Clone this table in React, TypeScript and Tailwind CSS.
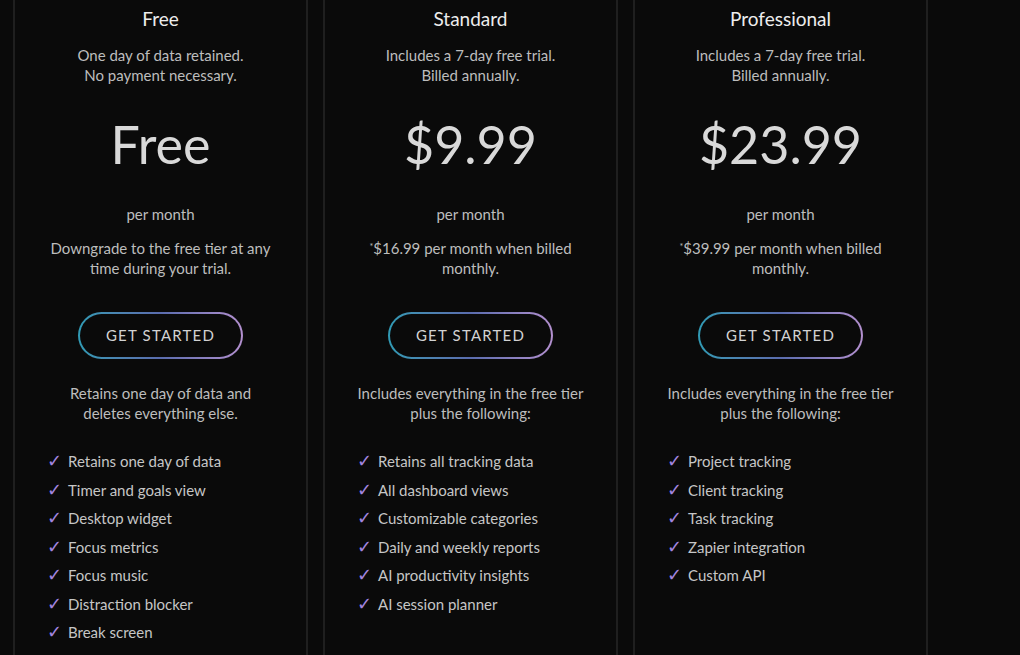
import React from 'react'

type Plan = {
  name: string
  blurb: [string, string]
  price: string
  note: [string, string]
  intro: [string, string]
  features: string[]
}

const plans: Plan[] = [
  {
    name: 'Free',
    blurb: ['One day of data retained.', 'No payment necessary.'],
    price: 'Free',
    note: ['Downgrade to the free tier at any', 'time during your trial.'],
    intro: ['Retains one day of data and', 'deletes everything else.'],
    features: [
      'Retains one day of data',
      'Timer and goals view',
      'Desktop widget',
      'Focus metrics',
      'Focus music',
      'Distraction blocker',
      'Break screen',
    ],
  },
  {
    name: 'Standard',
    blurb: ['Includes a 7-day free trial.', 'Billed annually.'],
    price: '$9.99',
    note: ['*$16.99 per month when billed', 'monthly.'],
    intro: ['Includes everything in the free tier', 'plus the following:'],
    features: [
      'Retains all tracking data',
      'All dashboard views',
      'Customizable categories',
      'Daily and weekly reports',
      'AI productivity insights',
      'AI session planner',
    ],
  },
  {
    name: 'Professional',
    blurb: ['Includes a 7-day free trial.', 'Billed annually.'],
    price: '$23.99',
    note: ['*$39.99 per month when billed', 'monthly.'],
    intro: ['Includes everything in the free tier', 'plus the following:'],
    features: ['Project tracking', 'Client tracking', 'Task tracking', 'Zapier integration', 'Custom API'],
  },
]

function Note({ text }: { text: string }) {
  // small raised asterisk before the monthly price
  if (!text.startsWith('*')) return <>{text}</>
  return (
    <>
      <span className="relative -top-[4px] text-[9px] leading-none">*</span>
      {text.slice(1)}
    </>
  )
}

function PlanCard({ plan }: { plan: Plan }) {
  return (
    <div className="flex w-[295px] shrink-0 flex-col border-x-2 border-[#1f1f1f] px-6 pt-[7px] text-center">
      <h2 className="text-[19px] leading-6 text-[#ededed]">{plan.name}</h2>

      <p className="mt-[14px] text-[15px] leading-5 text-[#bdbdbd]">
        {plan.blurb[0]}
        <br />
        {plan.blurb[1]}
      </p>

      <div className="mt-[34px] text-[52px] leading-[50px] text-[#d9d9d9]">{plan.price}</div>

      <p className="mt-[35px] text-[15px] leading-5 text-[#bdbdbd]">per month</p>

      <p className="mt-[14px] text-[15px] leading-5 text-[#bdbdbd]">
        <Note text={plan.note[0]} />
        <br />
        {plan.note[1]}
      </p>

      <div className="mt-[34px] flex justify-center">
        <button
          type="button"
          className="h-[47px] w-[165px] rounded-full bg-gradient-to-r from-[#2f9ab4] via-[#5a6cae] to-[#b390cf] p-[2px]"
        >
          <span className="flex h-full w-full items-center justify-center rounded-full bg-[#0a0a0a] text-[15px] tracking-[1.2px] text-[#d2d2d2]">
            GET STARTED
          </span>
        </button>
      </div>

      <p className="mt-[24px] text-[15px] leading-5 text-[#bdbdbd]">
        {plan.intro[0]}
        <br />
        {plan.intro[1]}
      </p>

      <ul className="mt-[24px] pl-[8px] text-left">
        {plan.features.map((f) => (
          <li key={f} className="flex h-[28.5px] items-center text-[15px] text-[#c6c6c6]">
            <span className="w-[21px] font-['DejaVu_Sans'] text-[18px] leading-none text-[#a285e0]">✓</span>
            {f}
          </li>
        ))}
      </ul>
    </div>
  )
}

export default function App() {
  return (
    <div className="h-[655px] w-[1020px] overflow-hidden bg-[#0a0a0a] font-['Lato','Open_Sans',sans-serif]">
      <div className="flex h-full gap-[15px] pl-[13px]">
        {plans.map((p) => (
          <PlanCard key={p.name} plan={p} />
        ))}
      </div>
    </div>
  )
}
